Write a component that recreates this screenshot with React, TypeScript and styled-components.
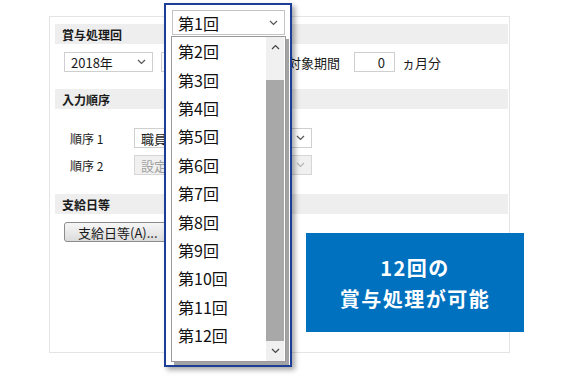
import React from 'react'
import styled, { createGlobalStyle } from 'styled-components'

const Global = createGlobalStyle`
  body {
    margin: 0;
    background: #fff;
    font-family: "Noto Sans CJK JP", "Noto Sans", sans-serif;
    color: #222;
  }
`

const Chevron = ({ color = '#555', up = false }: { color?: string; up?: boolean }) => (
  <svg width="9" height="6" viewBox="0 0 9 6">
    <polyline
      points={up ? '1,5 4.5,1.5 8,5' : '1,1 4.5,4.5 8,1'}
      fill="none"
      stroke={color}
      strokeWidth="1.2"
    />
  </svg>
)

const rounds = ['第2回', '第3回', '第4回', '第5回', '第6回', '第7回', '第8回', '第9回', '第10回', '第11回', '第12回']

const App = () => {
  return (
    <Page>
      <Global />
      <Panel>
        <SectionHead>賞与処理回</SectionHead>
        <Row $top={8} $indent={9}>
          <Select $w={89}>
            <span>2018年</span>
            <Chevron />
          </Select>
          {/* the round select sits under the open dropdown */}
          <Select $w={120} $ml={8} />
          <Label $ml={7}>対象期間</Label>
          <NumBox>0</NumBox>
          <Label $ml={7}>ヵ月分</Label>
        </Row>

        <SectionHead $top={17}>入力順序</SectionHead>
        <Row $top={19} $indent={15}>
          <OrderLabel>順序 1</OrderLabel>
          <Select $w={178}>
            <Clip>職員</Clip>
            <Chevron />
          </Select>
        </Row>
        <Row $top={7} $indent={15}>
          <OrderLabel>順序 2</OrderLabel>
          <Select $w={178} $disabled>
            <Clip>設定</Clip>
            <Chevron color="#b5b5b5" />
          </Select>
        </Row>

        <SectionHead $top={19}>支給日等</SectionHead>
        <Row $top={8} $indent={9}>
          <Button>支給日等(A)...</Button>
        </Row>
      </Panel>

      <Dropdown>
        <Current>
          <span>第1回</span>
          <Chevron />
        </Current>
        <List>
          <Items>
            {rounds.map((r) => (
              <Item key={r}>{r}</Item>
            ))}
          </Items>
          <ScrollBar>
            <Arrow>
              <Chevron up color="#444" />
            </Arrow>
            <Track />
            <Thumb />
            <Arrow>
              <Chevron color="#444" />
            </Arrow>
          </ScrollBar>
        </List>
      </Dropdown>

      <Callout>
        <span>12回の</span>
        <span>賞与処理が可能</span>
      </Callout>
    </Page>
  )
}

export default App

const Page = styled.div`
  position: relative;
  width: 575px;
  height: 383px;
  box-sizing: border-box;
  padding: 16px 0 0 49px;
  overflow: hidden;
`
const Panel = styled.div`
  width: 461px;
  height: 337px;
  box-sizing: border-box;
  border: 1px solid #e4e4e4;
  padding: 7px 1px 0 5px;
`
const SectionHead = styled.div<{ $top?: number }>`
  height: 20px;
  margin-top: ${(p) => p.$top ?? 0}px;
  background: #eeeeee;
  padding-left: 7px;
  display: flex;
  align-items: center;
  font-size: 12px;
  font-weight: 700;
  color: #1a1a1a;
`
const Row = styled.div<{ $top: number; $indent: number }>`
  display: flex;
  align-items: center;
  height: 20px;
  margin-top: ${(p) => p.$top}px;
  padding-left: ${(p) => p.$indent}px;
`
const Select = styled.div<{ $w: number; $ml?: number; $disabled?: boolean }>`
  width: ${(p) => p.$w}px;
  height: 20px;
  margin-left: ${(p) => p.$ml ?? 0}px;
  box-sizing: border-box;
  border: 1px solid ${(p) => (p.$disabled ? '#d6d6d6' : '#cfcfcf')};
  background: ${(p) => (p.$disabled ? '#f0f0f0' : '#fff')};
  color: ${(p) => (p.$disabled ? '#a0a0a0' : '#1a1a1a')};
  font-size: 13px;
  display: flex;
  align-items: center;
  justify-content: space-between;
  padding: 0 6px 0 6px;
`
const Clip = styled.span`
  width: 23px;
  overflow: hidden;
  white-space: nowrap;
`
const Label = styled.div<{ $ml: number }>`
  margin-left: ${(p) => p.$ml}px;
  font-size: 13px;
  color: #1a1a1a;
  white-space: nowrap;
`
const NumBox = styled.div`
  width: 41px;
  height: 20px;
  margin-left: 14px;
  box-sizing: border-box;
  border: 1px solid #cfcfcf;
  font-size: 13px;
  display: flex;
  align-items: center;
  justify-content: flex-end;
  padding-right: 9px;
`
const OrderLabel = styled.div`
  width: 64px;
  font-size: 12px;
  color: #1a1a1a;
`
const Button = styled.div`
  width: 108px;
  height: 20px;
  box-sizing: border-box;
  border: 1px solid #8c8c8c;
  border-radius: 3px;
  background: linear-gradient(#f6f6f6, #dcdcdc);
  font-size: 13px;
  display: flex;
  align-items: center;
  padding-left: 13px;
  color: #1a1a1a;
`
const Dropdown = styled.div`
  position: absolute;
  left: 164px;
  top: 3px;
  width: 128px;
  height: 364px;
  box-sizing: border-box;
  border: 2px solid #1c3e96;
  background: #fff;
  padding: 5px 5px 0 6px;
  box-shadow: 3px 3px 5px rgba(0, 0, 0, 0.35);
`
const Current = styled.div`
  height: 25px;
  box-sizing: border-box;
  border: 1px solid #c4c4c4;
  display: flex;
  align-items: center;
  justify-content: space-between;
  padding: 0 6px 0 5px;
  font-size: 16px;
  color: #111;
`
const List = styled.div`
  margin: 1px 0 0 -1px;
  width: 115px;
  height: 326px;
  box-sizing: border-box;
  border: 1px solid #9a9a9a;
  background: #fff;
  display: flex;
  box-shadow: 3px 3px 0 #a3a3a3;
`
const Items = styled.div`
  flex: 1;
  padding-left: 6px;
`
const Item = styled.div`
  height: 28.4px;
  display: flex;
  align-items: center;
  font-size: 16px;
  color: #111;
`
const ScrollBar = styled.div`
  width: 18px;
  margin-right: 1px;
  display: flex;
  flex-direction: column;
  background: #f0f0f0;
`
const Arrow = styled.div`
  height: 20px;
  display: flex;
  align-items: center;
  justify-content: center;
  background: #f0f0f0;
`
const Track = styled.div`
  height: 23px;
`
const Thumb = styled.div`
  flex: 1;
  background: #a8a8a8;
`
const Callout = styled.div`
  position: absolute;
  left: 306px;
  top: 233px;
  width: 218px;
  height: 99px;
  background: #0071bf;
  color: #fff;
  display: flex;
  flex-direction: column;
  align-items: center;
  justify-content: center;
  font-size: 20px;
  font-weight: 600;
  letter-spacing: 1.5px;
  line-height: 31px;
`
